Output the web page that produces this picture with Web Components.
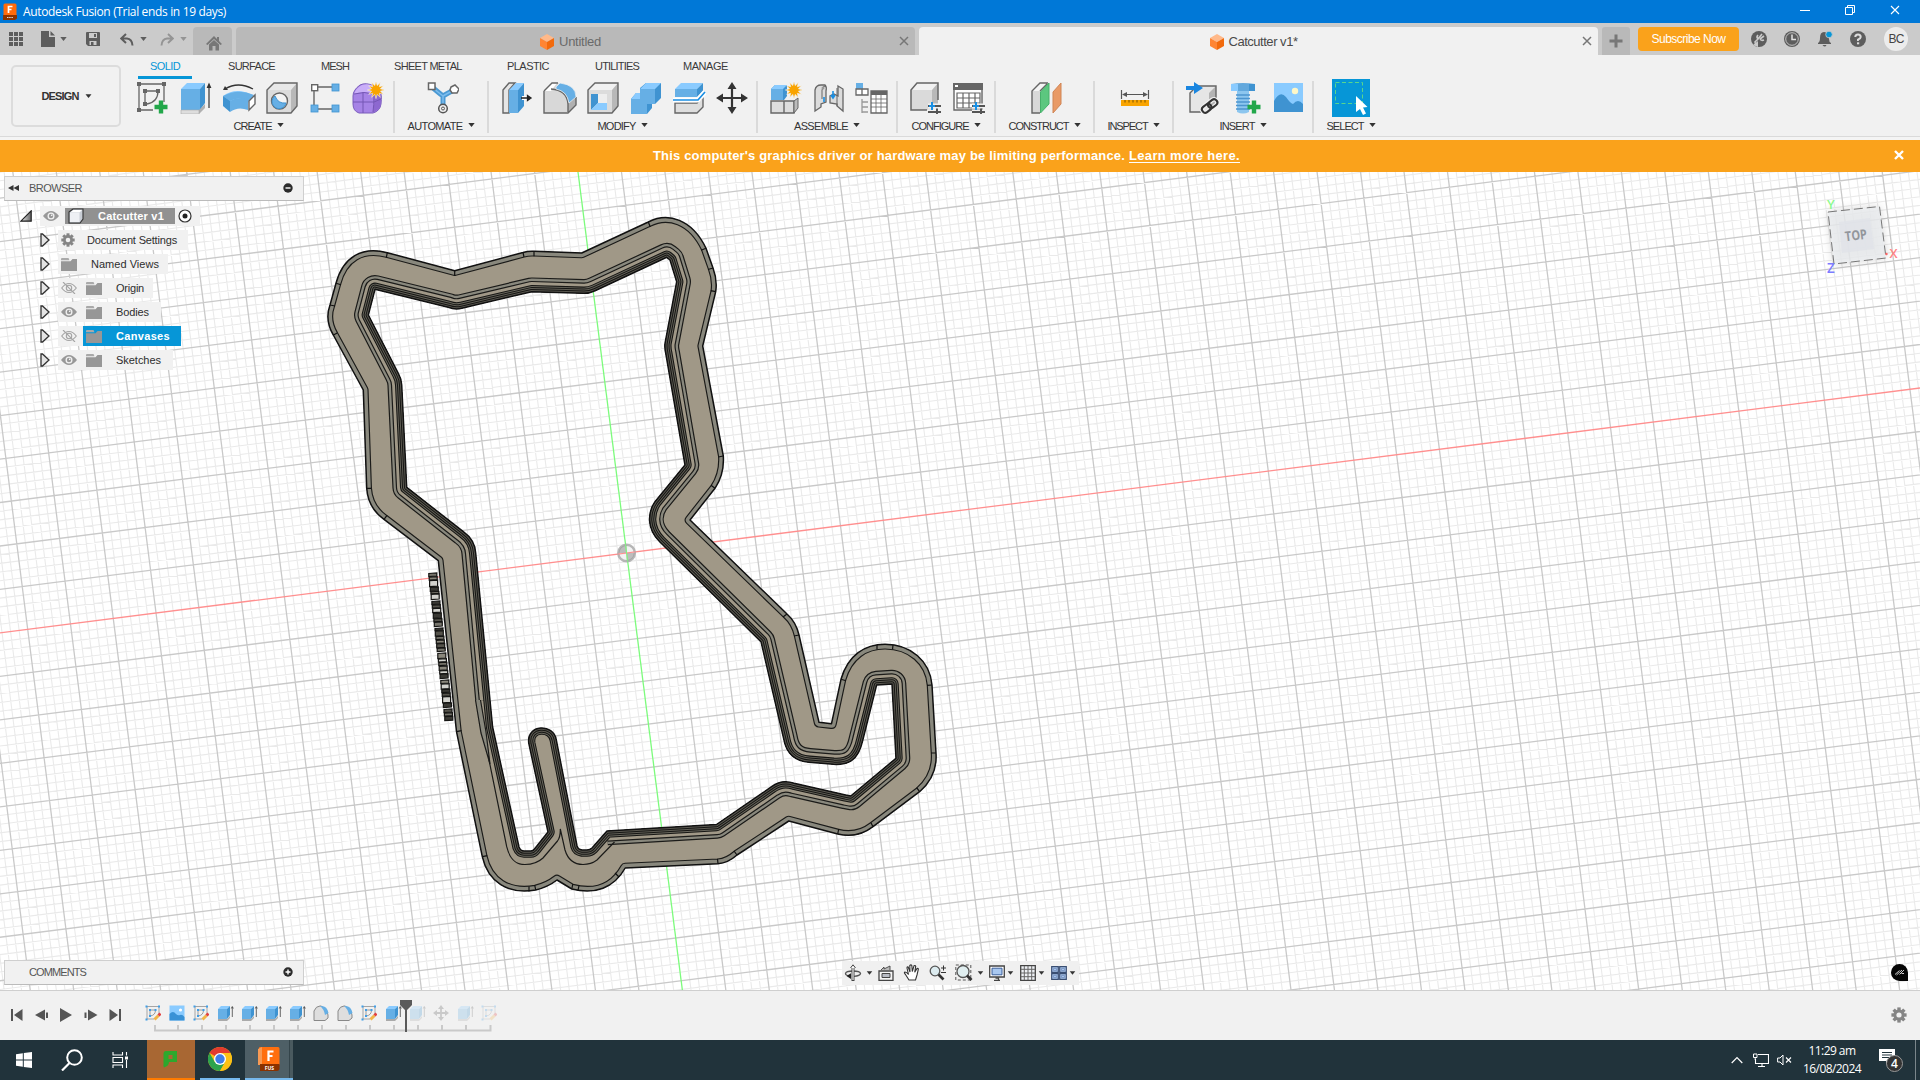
<!DOCTYPE html>
<html lang="en">
<head>
<meta charset="utf-8">
<title>Autodesk Fusion</title>
<style>
html,body{margin:0;padding:0;width:1920px;height:1080px;overflow:hidden;background:#fff}
body{font-family:"Liberation Sans",Arial,sans-serif;font-size:11px;color:#2e2e2e}
</style>
</head>
<body>
<fusion-app></fusion-app>
<script>
const define=(name,css,html,extra)=>{
  customElements.define(name,class extends HTMLElement{
    constructor(){super();this.attachShadow({mode:'open'});}
    connectedCallback(){
      this.shadowRoot.innerHTML=`<style>${css}</style>${typeof html==='function'?html(this):html}`;
      if(extra)extra(this);
    }
  });
};

/* ---------- text that is tracked to a given width ---------- */
const ctx=document.createElement('canvas').getContext('2d');
define('fit-text',':host{display:block;flex:none;white-space:nowrap;line-height:16px}','<slot></slot>',el=>{
  const cs=getComputedStyle(el),w=+el.getAttribute('w'),t=el.textContent;
  ctx.font=`${cs.fontWeight} ${cs.fontSize} ${cs.fontFamily}`;
  const n=ctx.measureText(t).width;
  el.style.letterSpacing=((w-n)/t.length).toFixed(3)+'px';
  el.style.width=w+'px';
});

/* ---------- icons ---------- */
const G='#666',B='#66afe5',BL='#8acbff',BD='#3f93d1',LG='#dadada';
const star=(x,y)=>{let p='';for(let i=0;i<24;i++){const r=i%2?4.6:8.6,a=i*Math.PI/12;p+=(i?'L':'M')+(x+r*Math.sin(a)).toFixed(1)+' '+(y-r*Math.cos(a)).toFixed(1);}return `<path d="${p}Z" fill="#f9a400" stroke="#f1f1f1" stroke-width=".6"/>`;};
const sq=(x,y,c=G,s=4)=>`<rect x="${x}" y="${y}" width="${s}" height="${s}" fill="${c}"/>`;
const gear=(c,h)=>{let s='';for(let i=0;i<8;i++)s+=`<rect x="-1.7" y="-7.6" width="3.4" height="4" transform="rotate(${i*45})"/>`;return `<g fill="${c}" transform="translate(8 8)">${s}<circle r="5.6"/><circle r="2.6" fill="${h}"/></g>`;};
const sliders=(x,y)=>`<path d="M${x} ${y}h13M${x} ${y+6}h13" stroke="#f1f1f1" stroke-width="5"/><path d="M${x} ${y}h13M${x} ${y+6}h13M${x+9} ${y+2.5}v7" stroke="#555" stroke-width="2"/><path d="M${x+4} ${y-4}v8M${x+1} ${y}h6" stroke="#1a8fe3" stroke-width="2"/>`;
const plus=(x,y)=>`<path d="M${x} ${y-6.5}v13M${x-6.5} ${y}h13" stroke="#22a74a" stroke-width="4.4"/>`;
const miniSketch=`<path d="M2 1.500H14V9M2 1.500V14H9" fill="none" stroke="#a5a5a5"/><path d="M5 5h5M5 5v6M10.500 5q0 5-5 6" fill="none" stroke="#9a9a9a"/>${[[.5,.5],[13,.5],[.5,13.5],[4,4],[9.500,4],[4,10]].map(p=>sq(p[0],p[1],'#3f9ee8',2)).join('')}<path d="M9.500 14.500l4-4" stroke="#f2b548" stroke-width="3"/><path d="M13.500 10.500l2-2" stroke="#e24040" stroke-width="3"/>`;
const miniBox=`<path d="M1 4L4 1H13L10 4Z" fill="${BL}"/><path d="M1 4H10V14H1Z" fill="${B}"/><path d="M10 4L13 1V10L10 14Z" fill="${BD}"/><path d="M1 14H10L13 11V13L10 16H1Z" fill="#aaa"/><path d="M15.300 2v10M14.300 3.500L15.300 1.500l1 2" stroke="#444" fill="none" stroke-width=".8"/>`;
const miniFillet=`<path d="M1 6Q3 1 7 1H8Q14 4 15 10V13L12 15.500H1Z" fill="#dedede" stroke="#888"/><path d="M7 1Q14 0 15.500 8L12 10Q11 4 7 1Z" fill="${B}"/>`;
const ICONS={
 sketch:[32,32,`<path d="M2 2H27V20M2 2V28H16" fill="none" stroke="${G}" stroke-width="1.300"/><path d="M8 9H21M8 9V22M21 9Q21 20 10 22" fill="none" stroke="${G}" stroke-width="1.300"/>${sq(0,0)}${sq(25,0)}${sq(0,26)}${sq(6,7)}${sq(19,7)}${sq(6,20)}${plus(24,25)}`],
 extrude:[32,32,`<path d="M1 7L7 1H25L20 7Z" fill="${BL}"/><path d="M1 7H20V28H1Z" fill="${B}"/><path d="M20 7L25 1V21L20 28Z" fill="${BD}"/><path d="M1 28H19L25 22V26L19 32H1Z" fill="#b0b0b0"/><path d="M1 28H19V32H1Z" fill="#ddd" stroke="#aaa" stroke-width=".6"/><path d="M29 26V3M27.500 5.500L29 2l1.500 3.500Z" stroke="#333" fill="#333" stroke-width="1.200"/>`],
 revolve:[34,32,`<path d="M3 7Q16-1 31 7" fill="none" stroke="#333" stroke-width="1.300"/><path d="M1 8l2-4 3 4z" fill="#333"/><path d="M1 14Q15 4 32 14L25 22Q16 16 8 22Z" fill="${BL}"/><path d="M1 14Q16 6 32 13L26 19Q16 14 8 19Z" fill="${B}"/><path d="M1 14L8 19V30L1 24Z" fill="${BD}"/><path d="M8 19Q16 14 26 18V28Q16 24 8 30Z" fill="${B}"/><path d="M27 19L33 13V22L27 28Z" fill="#fff" stroke="${G}" stroke-width="1.400"/>`],
 hole:[32,32,`<path d="M1 8L8 1H31V24L25 31H1Z" fill="#e8e8e8"/><path d="M25 8L31 1V24L25 31Z" fill="#b8b8b8"/><path d="M1 8H25V31H1Z" fill="#dcdcdc"/><path d="M1 8L8 1H31V24L25 31H1Z" fill="none" stroke="${G}" stroke-width="1.400"/><circle cx="13.500" cy="19" r="8" fill="#f4f4f4" stroke="${G}" stroke-width="1.400"/><path d="M9 14A7 7 0 1 0 20 21Q12 22 9 14Z" fill="${B}" stroke="${BD}"/>`],
 pattern:[30,32,`<path d="M4 6V26M8 5H22M8 27H22" stroke="${G}" stroke-width="1.400"/><rect x="1.700" y="2.700" width="6" height="6" fill="#fff" stroke="${G}" stroke-width="1.400"/><g fill="${B}" stroke="${BD}" stroke-width=".8"><rect x="22" y="2" width="7" height="7"/><rect x="1" y="23" width="7" height="7"/><rect x="22" y="23" width="7" height="7"/></g>`],
 form:[32,32,`<path d="M1 14Q1 8 8 3Q14 0 22 4L28 8Q30 12 29 22Q28 29 21 31H7Q1 29 1 22Z" fill="#a683e6" stroke="#7a5cbc"/><path d="M2 12Q4 6 10 3Q18 1 23 5L19 11Q9 9 2 12Z" fill="#c9aef8"/><path d="M22 12L28 8Q30 18 28 26L21 31Q23 20 22 12Z" fill="#8d68d0"/><path d="M22 12Q22 24 21 30M1 20H22L29 17M11 10V31M2 12Q12 9 22 12L28 8" fill="none" stroke="#7556b5"/>${star(24,8)}`],
 automate:[32,32,`<path d="M5 5Q12 11 16 14Q21 11 27 8M16 14V24" fill="none" stroke="#4b9ad4" stroke-width="5"/><path d="M5 5Q12 11 16 14Q21 11 27 8M16 14V24" fill="none" stroke="#7dbdee" stroke-width="1.500"/><rect x="1.500" y="1" width="6.500" height="6.500" fill="#fff" stroke="${G}" stroke-width="1.500"/><path d="M24 5l4-2 4 4-2 4-5 0-2-3z" fill="#fff" stroke="${G}" stroke-width="1.500"/><circle cx="16" cy="26.500" r="4.300" fill="#eee" stroke="#555" stroke-width="1.500"/><circle cx="16" cy="26.500" r="1.500" fill="none" stroke="#555"/>`],
 presspull:[32,32,`<path d="M2 8L8 1H14L8 8V31H2Z" fill="#e6e6e6" stroke="${G}" stroke-width="1.400"/><path d="M8 8L15 1H23L17 8Z" fill="${BL}"/><path d="M8 8H17V31H8Z" fill="${B}"/><path d="M17 8L23 1V24L17 31Z" fill="${BD}"/><path d="M21 16h6" stroke="#fff" stroke-width="4"/><path d="M20 16h8M26.500 13.500l3.500 2.500-3.500 2.500z" stroke="#222" fill="#222" stroke-width="1.300"/>`],
 fillet:[34,32,`<path d="M1 9L9 1H15Q24 4 28 14L33 16V23L25 31H1Z" fill="#d8d8d8"/><path d="M1 9L9 1H14L8 9Z" fill="#fff"/><path d="M25 31V20L33 14V23Z" fill="#b0b0b0"/><path d="M1 9L9 1H15M1 9V31H25L33 23V15M8 7Q24 8 25 22V30" fill="none" stroke="${G}" stroke-width="1.400"/><path d="M13 5L17 1Q33 3 33 15L26 21Q24 9 13 7Z" fill="${B}" stroke="#f1f1f1" stroke-width=".7"/>`],
 shell:[32,32,`<path d="M1 8L8 1H31V24L25 31H1Z" fill="#f2f2f2"/><path d="M25 8L31 1V24L25 31Z" fill="#b8b8b8"/><path d="M1 8H25V31H1Z" fill="#dcdcdc"/><path d="M1 8L8 1H31V24L25 31H1Z" fill="none" stroke="${G}" stroke-width="1.400"/><rect x="4" y="12" width="16" height="16" fill="#eee"/><path d="M4 12H11V21L4 28Z" fill="${BD}"/><path d="M4 28L11 21H20V28Z" fill="${BL}"/>`],
 combine:[32,32,`<path d="M1 17L6 11H10V6L16 1H31V16L25 22H22V26L17 32H1Z" fill="${BD}"/><path d="M1 17H10V7H25V22H17V32H1Z" fill="${B}"/><path d="M10 7L16 1H31L25 7ZM1 17L6 11H10V17Z" fill="${BL}"/>`],
 split:[34,32,`<path d="M3 7L9 1H31L25 7Z" fill="${BL}"/><path d="M3 7H25V15H3Z" fill="${B}"/><path d="M25 7L31 1V9L25 15Z" fill="${BD}"/><path d="M3 21H25L31 15V25L25 31H3Z" fill="#dedede" stroke="${G}" stroke-width="1.400"/><path d="M1 18H26L33 10" fill="none" stroke="#fff" stroke-width="5"/><path d="M1 18H26L33 10" fill="none" stroke="#1a8fe3" stroke-width="1.700"/>`],
 move:[32,32,`<path d="M16 5V27M5 16H27" stroke="#333" stroke-width="2.200"/><path d="M16 0l4.500 7h-9zM16 32l4.500-7h-9zM0 16l7-4.500v9zM32 16l-7-4.500v9z" fill="#333"/>`],
 newcomp:[32,32,`<path d="M1 19H14V31H1ZM14 19H24V31H14Z" fill="#ddd" stroke="${G}" stroke-width="1.400"/><path d="M24 19L28 16V26L24 31Z" fill="#bbb" stroke="${G}"/><path d="M1 7L5 3H17V14L14 18H1Z" fill="${BD}"/><path d="M1 7H13V18H1Z" fill="${B}"/><path d="M1 7L5 3H17L13 7Z" fill="${BL}"/>${star(24,8)}`],
 joint:[32,32,`<path d="M2 8Q3 3 8 3H12Q14 5 13 9V20L8 22V25L2 29Z" fill="#dcdcdc" stroke="${G}" stroke-width="1.300"/><path d="M9 8V17M9 8Q10 3 13 4" fill="none" stroke="${G}"/><circle cx="10" cy="6" r="1.500" fill="#999"/><path d="M25 4L30 7V29L24 24V22L17 21V14L21 12L25 14Z" fill="#dcdcdc" stroke="${G}" stroke-width="1.300"/><path d="M24 6V24" stroke="${G}"/><path d="M11 15V20M20 9V16M18 13l2 3 2-3" stroke="#1a8fe3" stroke-width="1.600" fill="none"/>`],
 bom:[34,32,`<rect x="1" y="1" width="7" height="7" fill="${B}"/><path d="M1 7H7V13H1ZM7 7H13V13H7Z" fill="#fff" stroke="${G}" stroke-width="1.300"/><path d="M7 17V31M7 20h6M7 25h6M7 30h6" stroke="#999" stroke-width="1.300" fill="none"/><path d="M16 9H32V31H16Z" fill="#fff" stroke="${G}" stroke-width="1.300"/><path d="M16 9H32V13H16Z" fill="${G}"/><path d="M16 17H32M16 21H32M16 25H32M21 13V31M26 13V31" stroke="${G}" stroke-width=".8"/>`],
 config:[34,32,`<path d="M2 8L8 1H29V19L23 28H2Z" fill="#f2f2f2"/><path d="M23 8L29 1V22L23 28Z" fill="#b8b8b8"/><path d="M2 8H23V28H2Z" fill="#dadada"/><path d="M29 18V1H8L2 8V28H18" fill="none" stroke="${G}" stroke-width="1.500"/>${sliders(19,24)}`],
 conftable:[34,32,`<path d="M2 2H30V28H2Z" fill="#fff" stroke="${G}" stroke-width="1.400"/><path d="M1 1H31V8H1Z" fill="${G}"/><rect x="3" y="3" width="3" height="2" fill="#fff"/><path d="M5 11H28V26H5ZM5 16H28M5 21H28M11 11V26M17 11V26M23 11V26" fill="none" stroke="${G}" stroke-width="1.200"/>${sliders(20,24)}`],
 plane:[32,32,`<path d="M2 9L10 1H19L11 9V31H2Z" fill="#f4f4f4"/><path d="M2 9H10V31H2Z" fill="#d8d8d8"/><path d="M10 31H2V9L10 1H18M10 9L17 2" fill="none" stroke="${G}" stroke-width="1.400"/><path d="M10.500 10L19 1V22L10.500 31Z" fill="#5cc77f" stroke="#46b06a"/><path d="M23 10L31 1V22L23 31Z" fill="#e99a66" stroke="#d08555"/>`],
 measure:[30,32,`<path d="M1.500 8V17M28.500 8V17M3 12.500H27" stroke="#555" stroke-width="1.200"/><path d="M2 12.500l5-2.500v5zM28 12.500l-5-2.500v5z" fill="#555"/><rect x="1" y="18" width="28" height="6" fill="#f9a400"/><path d="M5 18v2.500M9 18v2.500M13 18v2.500M17 18v2.500M21 18v2.500M25 18v2.500" stroke="#7a5200"/>`],
 derive:[34,32,`<path d="M5 11L12 4H31V22L24 30H5Z" fill="#e6e6e6"/><path d="M24 11L31 4V24L24 30Z" fill="#b4b4b4"/><path d="M31 17V4H12L5 11V30H17" fill="none" stroke="${G}" stroke-width="1.400"/><path d="M1 4H9V0L18 6L9 12V8H1Z" fill="#1a86e0"/><g fill="none" stroke="#f1f1f1" stroke-width="4.500" transform="rotate(-38 25 24)"><rect x="16" y="20.500" width="17.500" height="6.500" rx="3"/></g><g fill="none" stroke="#333" stroke-width="2.100" transform="rotate(-38 25 24)"><rect x="16" y="20.500" width="10" height="6.500" rx="3"/><rect x="23.500" y="20.500" width="10" height="6.500" rx="3"/></g>`],
 bolt:[32,32,`<path d="M2 2Q14 0 26 2V9H2Z" fill="#62a8dd"/><path d="M2 2H9V9H2Z" fill="${BL}"/><path d="M20 2H26V9H20Z" fill="${BD}"/><path d="M8 9H20V30Q14 33 8 30Z" fill="#8cc6ef"/><path d="M7 13H21M7 16.500H21M7 20H21M7 23.500H21M7 27H21" stroke="#4c95cf" stroke-width="1.400"/>${plus(25,25)}`],
 image:[30,32,`<rect x="1" y="1" width="29" height="29" fill="${BL}"/><path d="M1 19Q7 8 13 15Q17 21 20 22Q25 16 30 22V30H1Z" fill="${BD}"/><circle cx="22" cy="9" r="3.200" fill="#fdf7c8"/>`],
 select:[38,38,`<rect width="38" height="38" fill="#0696d7"/><rect x="3.500" y="3.500" width="27" height="21" fill="none" stroke="#58d68d" stroke-dasharray="4 2.500"/><path d="M24 17V33L28 30L31 36L34 34.500L31 28.500L35.500 28Z" fill="#fff"/>`],
 caret:[9,6,`<path d="M.5.500H8.500L4.500 5.500Z" fill="currentColor"/>`],
 app:[14,17,`<rect x=".5" y=".5" width="13" height="12.500" rx="1.500" fill="#ff6b0b"/><path d="M0 12h14v3.500L12 17H0z" fill="#8a3300"/><path d="M5.500 10V3.500h4M5.500 6.500h3" stroke="#fff" stroke-width="1.700" fill="none"/><path d="M4 14.500h6" stroke="#ddd" stroke-dasharray="1.500 .7"/>`],
 appgrid:[14,14,`<g fill="#5d5d5d"><path d="M0 0h4v4H0zM5 0h4v4H5zM10 0h4v4h-4zM0 5h4v4H0zM5 5h4v4H5zM10 5h4v4h-4zM0 10h4v4H0zM5 10h4v4H5zM10 10h4v4h-4z"/></g>`],
 file:[14,16,`<path d="M0 0H8V6H14V16H0Z" fill="#5d5d5d"/><path d="M9.500 0L14 4.500H9.500Z" fill="#5d5d5d"/>`],
 save:[14,14,`<path d="M1 0H13Q14 0 14 1V14H2L0 12V1Q0 0 1 0Z" fill="#5d5d5d"/><path d="M3 1H11V6H3Z" fill="#cbcbcb"/><path d="M8 2H10V5H8Z" fill="#5d5d5d"/><path d="M3.500 9H10.500V13H3.500Z" fill="#cbcbcb"/><path d="M5 10H7.500V13H5Z" fill="#5d5d5d"/>`],
 undo:[14,13,`<path d="M6 1L1.200 5.500L6 10M2 5.500H7Q12 6 12.500 12.500" fill="none" stroke="#5d5d5d" stroke-width="2"/>`],
 redo:[14,13,`<path d="M8 1L12.800 5.500L8 10M12 5.500H7Q2 6 1.500 12.500" fill="none" stroke="#949494" stroke-width="1.900"/>`],
 home:[16,15,`<path d="M0 8L8 0L11 3V1H13V5L16 8L14.500 9L8 3L1.500 9Z" fill="#777"/><path d="M3 8.500L8 4L13 8.500V14.500H9.500V10H6.500V14.500H3Z" fill="#777"/>`],
 cube:[14,16,`<path d="M7 0L14 4L7 8L0 4Z" fill="#ffb98a"/><path d="M0 4L7 8V16L0 12Z" fill="#ff8533"/><path d="M14 4L7 8V16L14 12Z" fill="#f26a0c"/>`],
 x:[10,10,`<path d="M1 1L9 9M9 1L1 9" stroke="currentColor" stroke-width="var(--sw,1.500)"/>`],
 plusbig:[14,14,`<path d="M7 .5V13.500M.5 7H13.500" stroke="#777" stroke-width="3"/>`],
 ext:[16,16,`<circle cx="8" cy="8" r="8" fill="#5d5d5d"/><path d="M5 14L4 11L7 8Q5 6 7 4M7 8L11 3M9 8L13 5M9 8Q10 10 13 9" fill="none" stroke="#cbcbcb" stroke-width="1.600"/><path d="M2 14L7 10V16Z" fill="#cbcbcb"/>`],
 clock:[16,16,`<circle cx="8" cy="8" r="8" fill="#5d5d5d"/><circle cx="8" cy="8" r="6.300" fill="none" stroke="#cbcbcb" stroke-width=".9"/><path d="M8 3.500V8.500H12" fill="none" stroke="#e2e2e2" stroke-width="1.500"/>`],
 bell:[16,16,`<path d="M7 1Q12 1 12 8Q12 11 14 12V13H1V12Q3 11 3 7Q3 1 7 1ZM5.500 14H9.500Q8 17 5.500 14Z" fill="#5d5d5d"/><circle cx="12" cy="3.500" r="3.300" fill="#0696d7" stroke="#cbcbcb" stroke-width=".8"/>`],
 help:[16,16,`<circle cx="8" cy="8" r="8" fill="#5d5d5d"/><path d="M5.300 6Q5.300 3.500 8 3.500Q10.700 3.500 10.700 6Q10.700 7.500 8 8.700V10" fill="none" stroke="#dcdcdc" stroke-width="2"/><rect x="7" y="11.300" width="2.200" height="2" fill="#dcdcdc"/>`],
 min:[10,10,`<path d="M0 5.500H10" stroke="#fff"/>`],
 restore:[10,10,`<path d="M.5 2.500H7.500V9.500H.5ZM2.500 2.500V.5H9.500V7.500H7.500" fill="none" stroke="#fff"/>`],
 rewind:[11,6,`<path d="M5.500 0V6L0 3ZM11 0V6L5.500 3Z" fill="#333"/>`],
 minus:[10,10,`<circle cx="5" cy="5" r="4.700" fill="#2b2b2b"/><path d="M2.500 5H7.500" stroke="#fff" stroke-width="1.400"/>`],
 pluscirc:[10,10,`<circle cx="5" cy="5" r="4.700" fill="#2b2b2b"/><path d="M2.500 5H7.500M5 2.500V7.500" stroke="#fff" stroke-width="1.400"/>`],
 open:[12,12,`<defs><linearGradient id="g"><stop offset="0" stop-color="#eee"/><stop offset="1" stop-color="#666"/></linearGradient></defs><path d="M.8 11.200H11.200V.8Z" fill="url(#g)" stroke="#222" stroke-width="1.200"/>`],
 closed:[10,14,`<path d="M1 1H2.500L9 7L2.500 13H1Z" fill="#e4e4e4" stroke="#333" stroke-width="1.300"/>`],
 eye:[16,12,`<path d="M0 6Q4 1 8 1Q12 1 16 6Q12 11 8 11Q4 11 0 6Z" fill="#989898"/><circle cx="8" cy="6" r="3.500" fill="#f1f1f1"/><circle cx="8" cy="6" r="2.200" fill="#989898"/><circle cx="8.700" cy="5.300" r=".8" fill="#fff"/>`],
 eyeoff:[16,12,`<path d="M.7 6Q4 1.500 8 1.500Q12 1.500 15.300 6Q12 10.500 8 10.500Q4 10.500 .7 6Z" fill="none" stroke="#a4a4a4" stroke-width="1.100"/><circle cx="8" cy="6" r="2.700" fill="none" stroke="#a4a4a4" stroke-width="1.100"/><path d="M2 0L14 12" stroke="#a4a4a4" stroke-width="1.100"/>`],
 comp:[16,16,`<path d="M1 4L5 1H15V11L12 15H1Z" fill="#c9ced6" stroke="#333" stroke-width="1.100"/><path d="M2 4.500L5.500 2H14L11.500 4.500Z" fill="#fff"/><path d="M2 5H11.500V14H2Z" fill="#eef0f4"/>`],
 folder:[16,13,`<path d="M0 3.300H9.500L11.500 1H16V13H0Z" fill="#979797"/><path d="M0 .5Q0 0 1 0H7.500L8.500 2.300H0Z" fill="#a9a9a9"/>`],
 gear:[16,16,gear('#858585','#f1f1f1')],
 radio:[14,14,`<circle cx="7" cy="7" r="6" fill="#fff" stroke="#333" stroke-width="1.200"/><circle cx="7" cy="7" r="2.500" fill="#222"/>`],
 orbit:[18,18,`<path d="M6 12.200Q1.500 11.500 1.500 9.500Q2 7 9 7Q16 7 16.500 9.500Q16 12 10 12.300" fill="none" stroke="#555" stroke-width="1.300"/><path d="M9 2V17" stroke="#444" stroke-width="3"/><path d="M9 2V16" stroke="#fff" stroke-width="1.100"/><path d="M6.500 4L9 .8l2.500 3.200" fill="#fff" stroke="#444"/><path d="M7 9.300L2.500 12l4.500 3z" fill="#222"/>`],
 look:[16,16,`<path d="M1 6H15V15.500H1Z" fill="#f6f6f6" stroke="#444" stroke-width="1.300"/><path d="M4 8.500H12V12.500H4Z" fill="#b9bcc4" stroke="#444"/><path d="M3 5L6 2V4L12 1V5" fill="#bbb" stroke="#444" stroke-width=".9"/>`],
 hand:[18,17,`<path d="M6 16L2.500 10.500Q.5 8.500 2 8Q3.500 8 5.500 10.500L4 4Q4 2.500 5.200 3L7 8L6.800 1.500Q8 .3 8.800 1.500L9.300 7.500L11 1.800Q12 1 12.700 2.300L11.700 8.300L14 4.500Q15.500 4 15.300 5.500L14 11L12.500 16Z" fill="#fff" stroke="#333" stroke-width="1.100"/>`],
 zoom:[18,17,`<circle cx="6" cy="7" r="4.800" fill="#dcebef" stroke="#555" stroke-width="1.300"/><path d="M9.500 10.500L14.500 15.500" stroke="#333" stroke-width="2.700"/><path d="M12 4H17M14.500 1.500V6.500M12 8.500H17" stroke="#333"/>`],
 fit:[18,17,`<rect x=".8" y="1" width="15" height="15" fill="none" stroke="#555" stroke-dasharray="3 2"/><circle cx="8" cy="7.500" r="6" fill="#e0eef0" stroke="#555" stroke-width="1.300"/><path d="M12 11.500L16.500 16" stroke="#333" stroke-width="2.800"/>`],
 monitor:[16,16,`<path d="M.7 1H15.300V12H.7Z" fill="#fff" stroke="#444" stroke-width="1.300"/><path d="M3 3.200H13V9.800H3Z" fill="#a9c8f0" stroke="#3a5f9a"/><path d="M5 15.500H11M6.500 13H9.500V15" stroke="#444" stroke-width="1.300" fill="none"/>`],
 grid:[16,16,`<path d="M.7.700H15.300V15.300H.7Z" fill="#eef1f5" stroke="#444" stroke-width="1.300"/><path d="M4.300 1V15M8 1V15M11.700 1V15M1 4.300H15M1 8H15M1 11.700H15" stroke="#666"/>`],
 views:[16,14,`<g fill="#a9c4ea" stroke="#3a4e72" stroke-width="1.200"><path d="M.7.700H7.300V6.300H.7ZM8.700.700H15.300V6.300H8.700ZM.7 7.700H7.300V13.300H.7ZM8.700 7.700H15.300V13.300H8.700Z"/></g><path d="M2.500 2.500h3v2h-3zM10.500 2.500h3v2h-3zM2.500 9.500h3v2h-3zM10.500 9.500h3v2h-3z" fill="#a9c4ea" stroke="#6b88b8" stroke-width=".7"/>`],
 first:[12,12,`<path d="M1 0V12" stroke="#555" stroke-width="2"/><path d="M11.500 0V12L3 6Z" fill="#555"/>`],
 prev:[14,12,`<path d="M10 .5V11.500L0 6Z" fill="#555"/><path d="M12 3.500V9" stroke="#555" stroke-width="2"/>`],
 play:[12,14,`<path d="M0 0V14L12 7Z" fill="#555"/>`],
 next:[14,12,`<path d="M4 .5V11.500L13.500 6Z" fill="#555"/><path d="M1.500 3.500V9" stroke="#555" stroke-width="2"/>`],
 last:[12,12,`<path d="M11 0V12" stroke="#555" stroke-width="2"/><path d="M.5 0V12L9 6Z" fill="#555"/>`],
 msk:[16,16,miniSketch], mbx:[17,16,miniBox], mfl:[16,16,miniFillet],
 mim:[16,16,`<rect x=".5" y=".5" width="15" height="15" fill="${BL}"/><path d="M.5 9Q4 5 7 9Q9 11 11 10Q13 9 15.500 12V15.500H.5Z" fill="#3a92d6"/><circle cx="11.500" cy="5" r="1.600" fill="#fff"/>`],
 mmv:[16,16,`<path d="M8 2V14M2 8H14" stroke="#555" stroke-width="1.800"/><path d="M8 0l3 4H5zM8 16l3-4H5zM0 8l4-3v6zM16 8l-4-3v6z" fill="#555"/>`],
 adsk:[17,17,`<path d="M8.500 0A8.500 8.500 0 0 1 17 8.500V17H8.500A8.500 8.500 0 0 1 8.500 0Z" fill="#050505"/><path d="M4 10.500L8.500 6.500M5.500 11L11 6M8.500 10.500L13 6M10.500 9.500H13" fill="none" stroke="#ccc"/>`],
 win:[16,16,`<path d="M0 2.300L6.800 1.300V7.500H0ZM7.800 1.100L16 0V7.500H7.800ZM0 8.500H6.800V14.700L0 13.700ZM7.800 8.500H16V16L7.800 14.900Z" fill="#fff"/>`],
 search:[22,22,`<circle cx="13.500" cy="8.500" r="7.300" fill="none" stroke="#fff" stroke-width="2"/><path d="M8.500 14L1 21.500" stroke="#fff" stroke-width="2.200"/>`],
 task:[16,16,`<path d="M1 0V3H10.500V0M1 16V13H10.500V16M1 5.500H10.500V10.500H1ZM14.500 0V3.500M14.500 8V16" fill="none" stroke="#fff" stroke-width="1.100"/><rect x="13" y="4.500" width="3" height="3" fill="#fff"/>`],
 green:[15,18,`<path d="M3 1H14V12H6Q6 16 1 17.500Q0 17 .5 14V4Q.5 1 3 1ZM5.500 5V9H9.500V5Z" fill="#2da82d" fill-rule="evenodd"/>`],
 chrome:[24,24,`<circle cx="12" cy="12" r="12" fill="#fbc116"/><path d="M12 12L1.600 6A12 12 0 0 1 22.400 6H12Z" fill="#e33b2e"/><path d="M1.600 6A12 12 0 0 0 12 24L17.200 15L12 12L6.800 15Z" fill="#2da34e"/><path d="M22.400 6A12 12 0 0 1 12 24L17.200 15L17 9L12 6Z" fill="#fbc116"/><circle cx="12" cy="12" r="6" fill="#fff"/><circle cx="12" cy="12" r="4.700" fill="#3f7ee8"/>`],
 fus:[22,24,`<path d="M1 1Q1 0 2 0H20Q21.500 0 21.500 1.500V18H.5Z" fill="#ff6f0f"/><path d="M0 2L4 0V18H0Z" fill="#f79a55"/><path d="M2 17H21.500V22Q21 24 19 24H2Z" fill="#8a3200"/><path d="M10.500 14V4.500H15.500M10.500 9H14.500" stroke="#fff" stroke-width="2.200" fill="none"/><text x="6.800" y="22.500" font-family="Open Sans" font-weight="700" font-size="5" fill="#fff">FUS</text>`],
 chev:[12,8,`<path d="M.7 7L6 1.500L11.300 7" fill="none" stroke="#fff" stroke-width="1.200"/>`],
 net:[16,14,`<path d="M5 1.500H15.500V10.500H2.500V6M9 10.500V13.500M5 13.500H12" fill="none" stroke="#fff" stroke-width="1.100"/><path d="M.5 1H4V4.500H.5ZM2.200 5V7" fill="none" stroke="#fff"/>`],
 vol:[15,12,`<path d="M.6 4H3L6 1V11L3 8H.6Z" fill="none" stroke="#fff"/><path d="M9 3.500L14 8.500M14 3.500L9 8.500" stroke="#fff" stroke-width="1.100"/>`],
 note:[16,16,`<path d="M0 0H16V12H10L7 15.500V12H0Z" fill="#fff"/><path d="M3 3.500H13M3 6H13M3 8.500H10" stroke="#21333b"/>`]
};
define('fx-icon',':host{display:block;flex:none;line-height:0}svg{display:block}',el=>{
  const [w,h,s]=ICONS[el.getAttribute('name')];
  return `<svg width="${w}" height="${h}" viewBox="0 0 ${w} ${h}">${s}</svg>`;
});
const ic=(n,a='')=>`<fx-icon name="${n}" ${a}></fx-icon>`;

/* ---------- window title ---------- */
define('title-bar',`:host{display:flex;align-items:center;height:23px;background:#0078d7;color:#fff;font:12px "Open Sans","Noto Sans",sans-serif;padding-left:3px}
.t{margin:0 auto 0 6px}.w{display:flex;gap:35px;align-items:center;margin:-3px 20px 0 0}`,
`${ic('app')}<fit-text class="t" w="203">Autodesk Fusion (Trial ends in 19 days)</fit-text><div class="w">${ic('min')}${ic('restore')}${ic('x','style="--sw:1.1"')}</div>`);

/* ---------- document tabs ---------- */
define('doc-tab',`:host{display:flex;width:679px;height:28px;background:#b9b9b9;border-radius:4px 4px 0 0;align-items:center;box-sizing:border-box;color:#6a6a6a;font-size:13px}
:host([active]){background:#f1f1f1;color:#4a4a4a}.c{flex:1;display:flex;justify-content:center;align-items:center;gap:5px;padding:2px 0 0 6px}.x{margin-right:6px;color:#777}`,
el=>`<div class="c">${ic('cube')}<fit-text w="${el.getAttribute('tw')}">${el.getAttribute('label')}</fit-text></div>${ic('x','class="x"')}`);
define('doc-bar',`:host{display:flex;height:32px;background:#cbcbcb;align-items:flex-end;color:#5d5d5d}
.q{display:flex;align-items:center;height:32px;width:193px;box-sizing:border-box;padding-left:9px}
.h{width:39px;height:28px;background:#b9b9b9;border-radius:4px 4px 0 0;display:flex;justify-content:center;align-items:center;padding:5px 0 0 2px;box-sizing:border-box;margin-right:4px}
.p{width:28px;height:28px;background:#b9b9b9;border-radius:3px 3px 0 0;display:flex;justify-content:center;align-items:center;margin:0 8px 0 4px}
doc-tab+doc-tab{margin-left:4px}
.s{width:101px;height:24px;border-radius:4px;background:#faa21b;color:#fff;font-size:12px;display:flex;align-items:center;justify-content:center;margin-bottom:4px}
.r{display:flex;gap:17px;align-items:center;margin:0 0 8px 12px}
.u{width:24px;height:24px;border-radius:50%;background:#ececec;margin:0 0 4px 18px;display:flex;align-items:center;justify-content:center;font-size:12px;color:#444}`,
`<div class="q">${ic('appgrid')}${ic('file','style="margin-left:18px"')}${ic('caret','style="margin-left:4px;transform:scale(.8)"')}${ic('save','style="margin-left:18px"')}${ic('undo','style="margin-left:20px"')}${ic('caret','style="margin-left:5px;transform:scale(.8)"')}${ic('redo','style="margin-left:12px"')}${ic('caret','style="margin-left:5px;color:#949494;transform:scale(.8)"')}</div>
<div class="h">${ic('home')}</div><doc-tab label="Untitled" tw="42"></doc-tab><doc-tab active label="Catcutter v1*" tw="69"></doc-tab><div class="p">${ic('plusbig')}</div>
<div class="s"><fit-text w="74">Subscribe Now</fit-text></div><div class="r">${ic('ext')}${ic('clock')}${ic('bell')}${ic('help')}</div><div class="u"><fit-text w="15">BC</fit-text></div>`);

/* ---------- ribbon ---------- */
define('ribbon-group',`:host{display:flex;flex-direction:column;align-items:center;box-sizing:border-box;height:52px;border-right:2px solid #dadada}
:host([last]){border:0}.i{display:flex;height:33px;flex:none;align-items:center;margin-left:3px}:host([last]) .i{margin:0}.i>div{width:43px;display:flex;justify-content:center;align-items:center}
.l{display:flex;flex:none;gap:4px;align-items:center;margin:4px 0 0 1px;color:#333}.l fx-icon{margin-top:-3px;transform:scale(.8)}`,
el=>`<div class="i">${el.getAttribute('icons').split(' ').map(n=>`<div>${ic(n)}</div>`).join('')}</div><div class="l"><fit-text w="${el.getAttribute('tw')}">${el.getAttribute('label')}</fit-text>${ic('caret')}</div>`);
const tabs=[['SOLID',30,0],['SURFACE',47,36],['MESH',28,46],['SHEET METAL',68,45],['PLASTIC',42,45],['UTILITIES',44,46],['MANAGE',45,44]];
const groups=[['CREATE',38,'sketch extrude revolve hole pattern form',271],['AUTOMATE',55,'automate',94],['MODIFY',38,'presspull fillet shell combine split move',269],['ASSEMBLE',54,'newcomp joint bom',140],['CONFIGURE',57,'config conftable',98],['CONSTRUCT',60,'plane',99],['INSPECT',40,'measure',79],['INSERT',35,'derive bolt image',140],['SELECT',37,'select',74]];
define('ribbon-bar',`:host{display:flex;height:85px;background:linear-gradient(#f1f1f1 81px,#dadada 81px,#dadada 82px,#f4f4f4 82px)}
.d{box-sizing:border-box;width:110px;height:62px;border:2px solid #dcdcdc;border-radius:5px;margin:10px 3px 0 11px;display:flex;gap:5px;align-items:center;justify-content:center;font-weight:bold;color:#333;padding-left:2px}
.d fx-icon{transform:scale(.75)}.m{display:flex;flex-direction:column}
.t{display:flex;height:26px;align-items:flex-start;padding-left:14px}.t>fit-text{margin-top:3px;color:#3a3a3a}
.a{display:flex;flex-direction:column;align-items:center;width:54px;color:#0696d7;padding-top:3px}.a i{width:54px;height:3px;background:#0696d7;margin-top:2px}
.g{display:flex}`,
`<div class="d"><fit-text w="37">DESIGN</fit-text>${ic('caret')}</div><div class="m"><div class="t">${tabs.map((t,i)=>i?`<fit-text w="${t[1]}" style="margin-left:${t[2]}px">${t[0]}</fit-text>`:`<div class="a"><fit-text w="30">SOLID</fit-text><i></i></div>`).join('')}</div>
<div class="g">${groups.map((g,i)=>`<ribbon-group label="${g[0]}" tw="${g[1]}" icons="${g[2]}" style="width:${g[3]}px" ${i==8?'last':''}></ribbon-group>`).join('')}</div></div>`);
define('notice-bar',`:host{display:flex;height:32px;background:#faa21b;color:#fff;font-weight:bold;font-size:13px;align-items:center;justify-content:center;padding-left:653px}
.a{margin-top:-1px}.b{margin:-1px auto 0 4px;text-underline-offset:2px}.x{margin:-2px 16px 0 0}`,
`<fit-text class="a" w="472">This computer's graphics driver or hardware may be limiting performance.</fit-text><fit-text class="b" w="111" style="text-decoration:underline">Learn more here.</fit-text>${ic('x','class="x" style="--sw:2.4"')}`);

/* ---------- model canvas ---------- */
const OUT='M387.3 252.7L454.7 270.700L523 252.500Q528 251 534 251.300L581.700 253L648.300 222C668 212 692 219 706 248.300L713 268Q717.500 280 715.700 291.700L702.700 346L723.300 456Q724.500 474 715 488.300L690 520L787 614Q796 622 799 635L819 722.300L831.500 723.700L841 679.300C848 655 865 644.300 885 644.300C911 644.500 930 661 932 685L936 753.300C937 768 932 781 919.600 791.700L873 826.700C861 836 850 837 837.700 834L788.800 821L737 855Q728 863 718 863.700L625.200 868C614 888 595 895 571.800 889L557 880Q548 887 535.700 890C508 895 488 882 482.300 856.700L456.500 731.700L438.300 560.700L384 519.300Q368 508 366.700 488.300L363.300 390L333.300 335Q324.500 320 330 305L336 283.300C343 257 362 246 387.300 252.700Z';
const RUN='M607 831L716.500 824.500L771.600 786.700Q782 779 794 783.300L845.600 795L850.800 796L896 758.300L892 684L876.600 685L862.800 740C858 762 847 765 833.600 764.300L809.500 762.300C793 761 786 752 783.600 738.300L761 641.700L659.700 541.700C646 528 648 512 655 501.700L685 465L665.700 353Q664.500 348 665 343.300L676.700 281.700L670 260L666.700 257.300L595 290.700Q589 293.500 583.300 293.300L531.700 291.700L461.700 308.300Q455 310 448.300 307.300L375 289.300L368.300 315L398.300 373.300Q401.500 379 401.700 385L406.700 487.300L463.300 531.700Q475 540 475.700 553.300';
const BAND=RUN+'L489.500 700';
const HOLE=RUN+'L492.600 727L519 847Q520.500 851 524 851H531Q533 851 534.500 849L548 832L528.800 743.300C526 724 554 723 556.300 740L577 846Q578 849.500 582 850H587Q590 850 592 848Z';
const grid=()=>{let mi='',ma='';const s=8.625;
  for(let i=-80;i<=160;i++){const v=(i*s).toFixed(2);const p=`M${v} -700V700`;if(i%5)mi+=p;else if(i)ma+=p;}
  for(let i=-75;i<=75;i++){const v=(i*s).toFixed(2);const p=`M-750 ${v}H1450`;if(i%5)mi+=p;else if(i)ma+=p;}
  return `<g transform="translate(626.6 553) rotate(-7.27)" fill="none"><path d="${mi}" stroke="#eaeaea" stroke-width="1.100"/><path d="${ma}" stroke="#c9c9c9" stroke-width="1.300"/><path d="M-750 0H1450" stroke="#ff8f8f" stroke-width="1.300"/><path d="M0-700V700" stroke="#7dfb7d" stroke-width="1.300"/></g>`;};
const layer=(d,arr)=>arr.map(([w,c])=>`<path d="${d}" fill="none" stroke="${c}" stroke-width="${w}" stroke-linejoin="round"/>`).join('');
/* raised lettering seen from the side: a run of small ribs */
const rails=()=>{let s='';const h=[3,3,6,4,2,5,3,3,4,5,3,4,2,5,3,3,4,3,5,3,3,4,3,4,3,5,3,3,6,4,3,3,4,3,3,3];const f=['#77756c','#d2d2cd','#55534b','#8a877c','#3a3934'];let t=0;
  for(let i=0;i<h.length&&t<144;i++){const x=(428.800+t*.112).toFixed(1);s+=`<path d="M${x} ${573.500+t}l8 -.5v${h[i]}l-8 .5z" fill="${f[(i*3+(i>>2))%5]}" stroke="#151513" stroke-width="1.200"/>`;t+=h[i]+((i%6===5)?2:.6);}return s;};
define('model-canvas',':host{display:block}svg{display:block}text{font-family:"Open Sans","Noto Sans",sans-serif}',
()=>`<svg width="1920" height="818" viewBox="0 172 1920 818"><rect y="172" width="1920" height="818" fill="#fff"/>${grid()}
<g><circle cx="626.600" cy="553" r="8.300" fill="#eee" fill-opacity=".7" stroke="#aaa" stroke-opacity=".85" stroke-width="2.400"/><path d="M626.600 553V545A8 8 0 0 0 618.600 553ZM626.600 553V561A8 8 0 0 0 634.600 553Z" fill="#999" fill-opacity=".6"/><path d="M618 554.100L635.200 551.900" stroke="#ff8f8f"/><path d="M625.500 544.500L627.700 561.500" stroke="#7dfb7d"/></g>
${rails()}
<clipPath id="c"><path clip-rule="evenodd" d="${OUT}${HOLE}"/></clipPath>
<path fill-rule="evenodd" d="${OUT}${HOLE}" fill="#a09887"/>
<g clip-path="url(#c)">${layer(BAND,[[28.600,'#1b1b19'],[26.200,'#89887d'],[21.600,'#1b1b19'],[19.200,'#a09887']])}
<path d="M475.500 700L481 733L490 764L486 732L480.500 700" fill="#89887d" stroke="#1b1b19" stroke-width="1.200"/>
<path d="M489 760L506.700 846.700C510 860 516 864.500 525 864.500Q536 864.500 543 858L557.500 841Q560.500 837 560.300 829L565 850C568 860 574 864.500 583 864.500Q591 864.500 597 860L614.500 842" fill="none" stroke="#1b1b19" stroke-width="1.200"/>
${layer(OUT,[[10.600,'#1b1b19'],[8.300,'#89887d']])}
${layer(HOLE,[[13.400,'#161614'],[11.300,'#6a685e'],[9.400,'#161614'],[7.400,'#605e55'],[5.400,'#161614'],[3.400,'#5a5850']])}</g>
${layer(OUT,[[1.500,'#111']])}${layer(HOLE,[[1.500,'#111']])}
<path d="M387.300 252.700l-1 5M454.700 270.700v5M523 252.500l1 4.500M534 251.300v5M648.300 222l2 5M706 248.300l-5 2M713 268l-5 1.500M715.700 291.700l-5-1M723.300 456l-5 1M715 488.300l-4-3M787 614l-4 3M799 635l-5 1M841 679.300l5 1.500M877 645v4.500M893 645l-.5 4.500M932 685l-5 .3M936 753h-5M919.600 791.700l-3-4M873 826.700l-2-4M837.700 834l1-5M737 855l-3-4M718 863.700l-.5-5M571.800 889l1-5M578 890.500l1-5M529 891.500v-5M535.700 890l-1-5M482.300 856.700l5-1M456.500 731.700l5-1M384 519.300l3-4M366.700 488.300h5M333.300 335l4-2M330 305l5 1M336 283.300l5 1.500M619 877l-4-4" stroke="#111" stroke-width="1.200"/>
<g><path d="M1828 212L1879.500 206.500L1886 258L1834 264Z" fill="#eceef0" fill-opacity=".82" style="filter:drop-shadow(0 0 4px rgba(0,0,0,.2))"/><path d="M1839 222L1870 218L1874 249L1842 253Z" fill="#e0e2e8" fill-opacity=".8"/><path d="M1828 212L1879.500 206.500L1886 258L1834 264Z" fill="none" stroke="#777" stroke-dasharray="9 4"/>
<text x="1845" y="240" transform="rotate(-7 1856 236)" font-size="13.500" font-weight="700" fill="#92969c" textLength="22" lengthAdjust="spacingAndGlyphs">TOP</text>
<text x="1827" y="209" font-size="13" font-weight="600" fill="#8dfa8d">Y</text><text x="1889.500" y="258" font-size="13" font-weight="600" fill="#ff8585">X</text><circle cx="1886.500" cy="254" r="1.200" fill="#f66"/><text x="1827" y="272.500" font-size="13.500" font-weight="600" fill="#7c7cff">Z</text></g></svg>`);

/* ---------- panels over the canvas ---------- */
define('side-panel',`:host{display:flex;align-items:center;width:300px;height:25px;box-sizing:border-box;background:#f1f1f1;border:1px solid #cfcfcf;border-bottom:1.500px solid #bbb;color:#555;padding:0 10px 1px 3px}
.r{width:11px}fit-text{margin:0 auto 0 10px}`,
el=>`<div class="r">${el.hasAttribute('rew')?ic('rewind'):''}</div><fit-text w="${el.getAttribute('tw')}">${el.getAttribute('label')}</fit-text>${ic(el.getAttribute('btn'))}`);
define('tree-row',`:host{display:flex;height:24px;align-items:center;color:#2e2e2e}.tri{width:18px;margin-left:40px}
.b{display:flex;height:20px;background:#f1f1f1;align-items:center;box-sizing:border-box}.e{width:25px;height:20px;display:flex;align-items:center;justify-content:center;padding-right:3px;box-sizing:border-box}
.s{display:flex;align-items:center;height:20px;box-sizing:border-box;padding-left:3px;flex:1}.s fit-text{margin-left:14px}.sel{background:#0696d7;color:#fff;font-weight:bold}
.root{height:16px;width:110px;background:#919191;color:#fff;font-weight:bold;display:flex;align-items:center;padding-left:3px;box-sizing:border-box}.root fit-text{margin-left:14px}`,
el=>{const a=n=>el.getAttribute(n),t=`<fit-text w="${a('tw')}" ${a('tm')?`style="margin-left:${a('tm')}px"`:''}>${a('label')}</fit-text>`;
 if(el.hasAttribute('root'))return `<div style="margin-left:20px;width:20px">${ic('open')}</div><div class="b" style="width:160px"><div class="e" style="padding:0 3px 0 0">${ic('eye')}</div><div class="root">${ic('comp')}${t}</div>${ic('radio','style="margin-left:3px"')}</div>`;
 return `<div class="tri">${ic('closed')}</div><div class="b" style="width:${a('bw')}px">${a('eye')?`<div class="e">${ic(a('eye'))}</div>`:''}<div class="s ${el.hasAttribute('sel')?'sel':''}">${ic(a('icon'),a('icon')=='gear'?'style="margin-left:-1px;transform:scale(.88)"':'')}${t}</div></div>`;});
define('nav-tools',`:host{display:flex;width:237px;height:24px;background:#f0f0f0;color:#333;align-items:center}fx-icon[name=caret]{transform:scale(.7)}`,
`${ic('orbit','style="margin-left:2px"')}${ic('caret','style="margin-left:3px"')}${ic('look','style="margin-left:4px"')}${ic('hand','style="margin-left:9px"')}${ic('zoom','style="margin-left:8px"')}${ic('fit','style="margin-left:8px"')}${ic('caret','style="margin-left:3px"')}${ic('monitor','style="margin-left:4px"')}${ic('caret','style="margin-left:1px"')}${ic('grid','style="margin-left:5px"')}${ic('caret','style="margin-left:1px"')}${ic('views','style="margin-left:5px"')}${ic('caret','style="margin-left:1px"')}`);
define('work-area',`:host{display:grid;height:818px;overflow:hidden}:host>*,.o{grid-area:1/1}.o{z-index:1;display:flex;flex-direction:column;justify-content:space-between;padding:4px 12px 5px 4px;box-sizing:border-box}
.tree{margin:3px 0 0 -4px}.bt{display:grid;grid-template-columns:300px 538px 237px 1fr 17px;align-items:center}.bt>:nth-child(2){grid-column:3}.bt>:last-child{grid-column:5}`,
`<model-canvas></model-canvas><div class="o"><div><side-panel rew label="BROWSER" tw="53" btn="minus"></side-panel><div class="tree">
<tree-row root label="Catcutter v1" tw="66"></tree-row>
<tree-row bw="130" icon="gear" label="Document Settings" tw="90" tm="11"></tree-row>
<tree-row bw="110" icon="folder" label="Named Views" tw="68"></tree-row>
<tree-row bw="95" eye="eyeoff" icon="folder" label="Origin" tw="28"></tree-row>
<tree-row bw="103" eye="eye" icon="folder" label="Bodies" tw="33"></tree-row>
<tree-row bw="123" sel eye="eyeoff" icon="folder" label="Canvases" tw="54"></tree-row>
<tree-row bw="115" eye="eye" icon="folder" label="Sketches" tw="45"></tree-row></div></div>
<div class="bt"><side-panel label="COMMENTS" tw="57" btn="pluscirc"></side-panel><nav-tools></nav-tools>${ic('adsk')}</div></div>`);

/* ---------- timeline ---------- */
define('time-line',`:host{display:flex;height:50px;box-sizing:border-box;border-top:1.500px solid #cfcfcf;background:#f1f1f1;align-items:flex-start}
.p{display:flex;gap:11.500px;align-items:center;width:145px;height:48px;box-sizing:border-box;padding-left:11px}
.t{display:grid}.t>*{grid-area:1/1}.f{display:flex;padding-top:14px}.f div{width:24px}.dim{opacity:.25}.g{margin:16px 13px 0 auto}svg{display:block}`,
`<div class="p">${ic('first')}${ic('prev')}${ic('play')}${ic('next')}${ic('last')}</div>
<div class="t"><svg width="360" height="48" viewBox="0 0 360 48"><path d="M10 34V39.500H345.500V34M33 34v6M57 34v6M81 34v6M105 34v6M129 34v6M153 34v6M177 34v6M201 34v6M225 34v6M249 34v6M273 34v6M297 34v6M321 34v6" fill="none" stroke="#c9c9c9" stroke-width="2"/></svg>
<div class="f">${'msk mim msk mbx mbx mbx mbx mfl mfl msk mbx mbx mmv mbx msk'.split(' ').map((n,i)=>`<div ${i>10?'class="dim"':''}>${ic(n)}</div>`).join('')}</div>
<svg width="360" height="48" viewBox="0 0 360 48"><path d="M255 9H267V14L262 19V41H260V19L255 14Z" fill="#5a5a5a"/></svg></div>${ic('gear','class="g"')}`);

/* ---------- taskbar ---------- */
define('task-bar',`:host{display:flex;height:40px;background:#21333b;color:#fff;font:12px "Open Sans","Noto Sans",sans-serif;align-items:center}
.c{height:40px;box-sizing:border-box;display:flex;align-items:center;justify-content:center}
.g{width:48px;background:#a86733;border-bottom:2px solid #ff7b00;margin-right:5px;padding-right:1px}.k{width:40px;border-bottom:2px solid #76b9ed;margin-right:5px}
.f{width:48px;background:linear-gradient(90deg,#4e5f66 44px,#34444a 44px,#34444a 45px,#4a5a5f 45px);border-bottom:2px solid #76b9ed}
.d{width:62px;display:flex;flex-direction:column;align-items:center;margin:0 16px 0 8px}.d fit-text{line-height:18px}
.n{display:grid;width:30px}.n>*{grid-area:1/1}.b{width:15px;height:15px;border-radius:50%;background:#333;border:1px solid #999;display:flex;align-items:center;justify-content:center;margin:6px 0 0 7px;font-weight:600}.e{width:1px;height:40px;background:#7b868b;margin:0 4px 0 6px}`,
`<div class="c" style="width:48px">${ic('win')}</div><div class="c" style="width:48px">${ic('search')}</div><div class="c" style="width:51px;padding-right:3px">${ic('task')}</div>
<div class="c g">${ic('green')}</div><div class="c k">${ic('chrome')}</div><div class="c f">${ic('fus')}</div>
<div style="flex:1"></div>${ic('chev')}${ic('net','style="margin-left:10px"')}${ic('vol','style="margin-left:8px"')}
<div class="d" style="margin-left:9px"><fit-text w="47">11:29 am</fit-text><fit-text w="58">16/08/2024</fit-text></div><div class="n">${ic('note')}<div class="b">4</div></div><div class="e"></div>`);

define('fusion-app',':host{display:flex;flex-direction:column;width:1920px;height:1080px;overflow:hidden}',
'<title-bar></title-bar><doc-bar></doc-bar><ribbon-bar></ribbon-bar><notice-bar></notice-bar><work-area></work-area><time-line></time-line><task-bar></task-bar>');
</script>
</body>
</html>
